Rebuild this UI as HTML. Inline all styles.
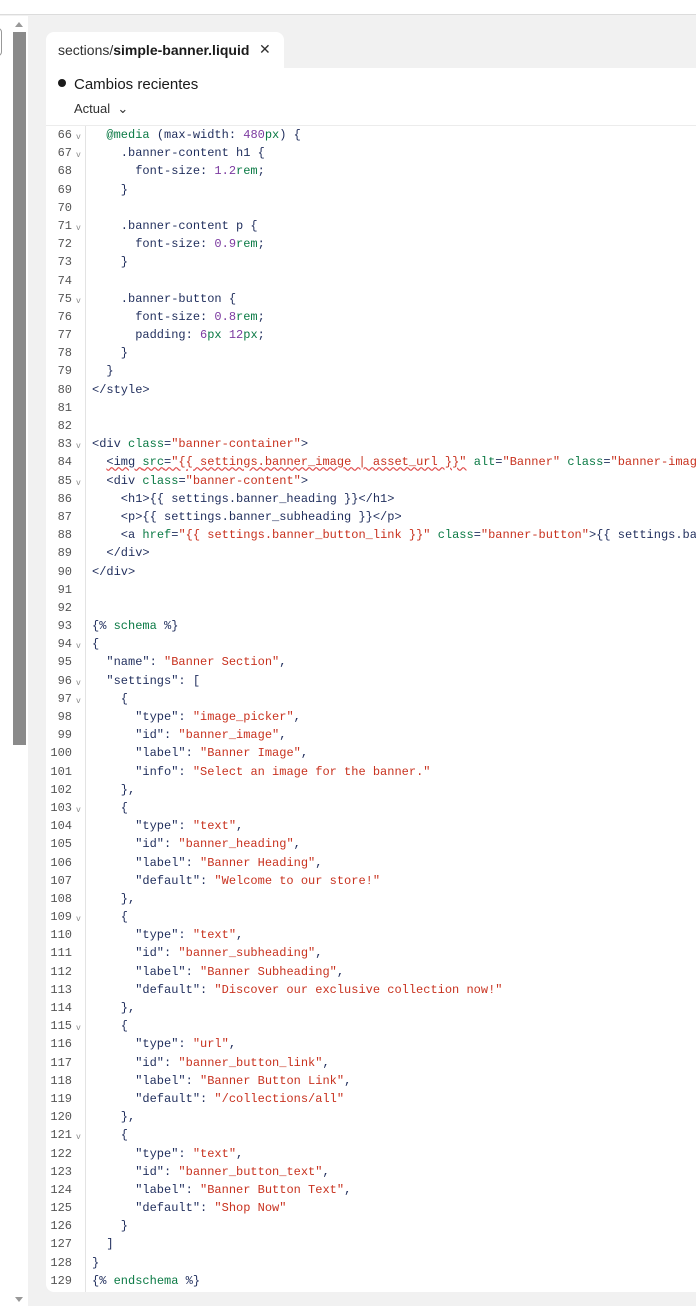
<!DOCTYPE html>
<html><head><meta charset="utf-8"><style>
*{margin:0;padding:0;box-sizing:border-box}
body{width:696px;height:1306px;background:#f1f1f1;position:relative;overflow:hidden;font-family:"Liberation Sans",sans-serif}
.top{position:absolute;left:0;top:0;width:696px;height:15px;background:#fff;border-bottom:1px solid #dcdcdc}
.lstrip{position:absolute;left:0;top:16px;width:28px;height:1290px;background:#fff}
.thumb{position:absolute;left:13px;top:16px;width:13px;height:713px;background:#8a8a8a}
.sbox{position:absolute;left:-8px;top:12px;width:10px;height:28px;border:1px solid #999;border-radius:4px}
.tri{position:absolute;left:15px;width:0;height:0;border-left:4px solid transparent;border-right:4px solid transparent}
.tab{position:absolute;left:46px;top:32px;width:238px;height:37px;background:#fff;border-radius:8px 8px 0 0;font-size:14px;color:#303030;padding:10px 0 0 12px}
.tab b{font-weight:bold;color:#1a1a1a}
.tab .x{position:absolute;left:213px;top:9px;font-size:14px}
.panel{position:absolute;left:46px;top:68px;width:650px;height:1224px;background:#fff;border-radius:0 0 0 8px;overflow:hidden}
.hd1{position:absolute;left:12px;top:8px;font-size:15px;color:#1a1a1a}
.hd1 i{display:inline-block;width:8px;height:8px;border-radius:50%;background:#1a1a1a;margin-right:8px;vertical-align:2px}
.hd2{position:absolute;left:28px;top:33px;font-size:13px;color:#303030}
.code{position:absolute;left:0;top:57px;width:660px;border-top:1px solid #ececec}
.gut{position:absolute;left:0;top:0;width:40px;height:1167px;border-right:1px solid #e3e3e3}
pre{font-family:"Liberation Mono",monospace;font-size:12px;line-height:18.19px;white-space:pre;color:#1f2d5c}
.nums{position:absolute;left:0;top:0;width:26px;text-align:right;color:#555}
.fold{position:absolute;left:30px;top:3px;color:#888;font-size:8px;line-height:18.19px}
.src{position:absolute;left:46px;top:0}
.k{color:#0b7a45}.s{color:#c8321f}.n{color:#7c3aa0}
.sq{text-decoration:underline wavy #e05050}
</style></head><body>
<div class="top"></div>
<div class="lstrip"><div class="thumb"></div><div class="sbox"></div>
<div class="tri" style="top:6px;border-bottom:5px solid #999"></div>
<div class="tri" style="top:1281px;border-top:5px solid #999"></div></div>
<div class="tab">sections/<b>simple-banner.liquid</b><span class="x">✕</span></div>
<div class="panel">
<div class="hd1"><i></i>Cambios recientes</div>
<div class="hd2">Actual &nbsp;⌄</div>
<div class="code">
<div class="gut"></div>
<pre class="nums">66
67
68
69
70
71
72
73
74
75
76
77
78
79
80
81
82
83
84
85
86
87
88
89
90
91
92
93
94
95
96
97
98
99
100
101
102
103
104
105
106
107
108
109
110
111
112
113
114
115
116
117
118
119
120
121
122
123
124
125
126
127
128
129</pre>
<pre class="fold">v
v



v



v







v

v








v

v
v





v





v





v





v</pre>
<pre class="src">  <span class="k">@media</span> (max-width: <span class="n">480</span><span class="k">px</span>) {
    .banner-content h1 {
      font-size: <span class="n">1.2</span><span class="k">rem</span>;
    }

    .banner-content p {
      font-size: <span class="n">0.9</span><span class="k">rem</span>;
    }

    .banner-button {
      font-size: <span class="n">0.8</span><span class="k">rem</span>;
      padding: <span class="n">6</span><span class="k">px</span> <span class="n">12</span><span class="k">px</span>;
    }
  }
&lt;/style&gt;


&lt;div <span class="k">class</span>=<span class="s">"banner-container"</span>&gt;
  <span class="sq">&lt;img <span class="k">src</span>=<span class="s">"{{ settings.banner_image | asset_url }}"</span></span> <span class="k">alt</span>=<span class="s">"Banner"</span> <span class="k">class</span>=<span class="s">"banner-image"</span>&gt;
  &lt;div <span class="k">class</span>=<span class="s">"banner-content"</span>&gt;
    &lt;h1&gt;{{ settings.banner_heading }}&lt;/h1&gt;
    &lt;p&gt;{{ settings.banner_subheading }}&lt;/p&gt;
    &lt;a <span class="k">href</span>=<span class="s">"{{ settings.banner_button_link }}"</span> <span class="k">class</span>=<span class="s">"banner-button"</span>&gt;{{ settings.banner_button_text }}&lt;/a&gt;
  &lt;/div&gt;
&lt;/div&gt;


{% <span class="k">schema</span> %}
{
  "name": <span class="s">"Banner Section"</span>,
  "settings": [
    {
      "type": <span class="s">"image_picker"</span>,
      "id": <span class="s">"banner_image"</span>,
      "label": <span class="s">"Banner Image"</span>,
      "info": <span class="s">"Select an image for the banner."</span>
    },
    {
      "type": <span class="s">"text"</span>,
      "id": <span class="s">"banner_heading"</span>,
      "label": <span class="s">"Banner Heading"</span>,
      "default": <span class="s">"Welcome to our store!"</span>
    },
    {
      "type": <span class="s">"text"</span>,
      "id": <span class="s">"banner_subheading"</span>,
      "label": <span class="s">"Banner Subheading"</span>,
      "default": <span class="s">"Discover our exclusive collection now!"</span>
    },
    {
      "type": <span class="s">"url"</span>,
      "id": <span class="s">"banner_button_link"</span>,
      "label": <span class="s">"Banner Button Link"</span>,
      "default": <span class="s">"/collections/all"</span>
    },
    {
      "type": <span class="s">"text"</span>,
      "id": <span class="s">"banner_button_text"</span>,
      "label": <span class="s">"Banner Button Text"</span>,
      "default": <span class="s">"Shop Now"</span>
    }
  ]
}
{% <span class="k">endschema</span> %}</pre>
</div>
</div>
</body></html>
